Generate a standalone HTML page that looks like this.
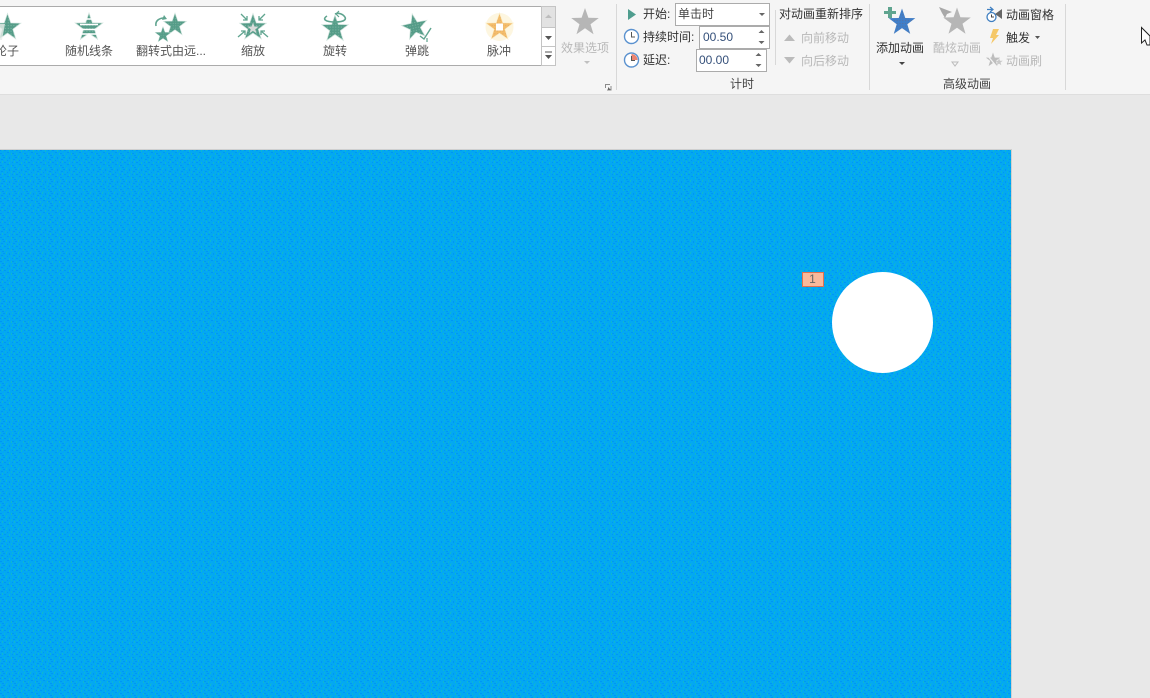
<!DOCTYPE html>
<html lang="zh">
<head>
<meta charset="utf-8">
<style>
html,body{margin:0;padding:0;width:1150px;height:698px;overflow:hidden;background:#e8e8e8}
body{position:relative;font-family:"Liberation Sans","Noto Sans CJK SC",sans-serif;font-size:12px;color:#444}
.a{position:absolute}
.t{position:absolute;white-space:nowrap;line-height:16px;height:16px}
.c{transform:translateX(-50%)}
.g{color:#b8b8b8}
.l{color:#555}
.box{position:absolute;background:#fff;border:1px solid #ababab;box-sizing:border-box}
.sep{position:absolute;width:1px;background:#d8d8d8}
svg{position:absolute;left:0;top:0}
</style>
</head>
<body>
<div class="a" style="left:0;top:0;width:1150px;height:94px;background:#f5f5f5"></div>
<div class="a" style="left:0;top:94px;width:1150px;height:1px;background:#dedede"></div>
<div class="a" style="left:0;top:150px;width:1011px;height:548px;background:#03a8f0;outline:1px solid #cfcfcf"></div>

<div class="box" style="left:-2px;top:6px;width:544px;height:60px"></div>
<div class="a" style="left:541px;top:6px;width:15px;height:60px;background:#fff;border:1px solid #c4c4c4;box-sizing:border-box"></div>
<div class="a" style="left:542px;top:7px;width:13px;height:20px;background:#e2e2e2"></div>
<div class="a" style="left:542px;top:46px;width:13px;height:1px;background:#c4c4c4"></div>
<div class="a" style="left:542px;top:27px;width:13px;height:1px;background:#c4c4c4"></div>

<div class="box" style="left:675px;top:3px;width:95px;height:23px"></div>
<div class="box" style="left:699px;top:26px;width:71px;height:23px"></div>
<div class="box" style="left:696px;top:49px;width:71px;height:23px"></div>

<svg width="1150" height="698" viewBox="0 0 1150 698">
<defs>
<pattern id="d" width="12" height="12" patternUnits="userSpaceOnUse">
<rect width="12" height="12" fill="#03a8f2"/>
<rect x="0" y="0" width="1" height="2" fill="#0bb4d8"/><rect x="3" y="1" width="2" height="1" fill="#0096f5"/>
<rect x="6" y="0" width="1" height="2" fill="#10b8cc"/><rect x="9" y="1" width="1" height="2" fill="#0096f5"/>
<rect x="1" y="3" width="2" height="1" fill="#0096f5"/><rect x="11" y="3" width="1" height="2" fill="#0bb4d8"/>
<rect x="5" y="3" width="1" height="2" fill="#0bb4d8"/><rect x="7" y="4" width="1" height="1" fill="#0096f5"/>
<rect x="2" y="5" width="1" height="2" fill="#10b8cc"/><rect x="9" y="6" width="1" height="2" fill="#10b8cc"/>
<rect x="4" y="6" width="2" height="1" fill="#0096f5"/><rect x="0" y="6" width="1" height="1" fill="#0096f5"/>
<rect x="7" y="8" width="2" height="1" fill="#0096f5"/><rect x="4" y="9" width="1" height="2" fill="#0bb4d8"/>
<rect x="0" y="9" width="2" height="1" fill="#0096f5"/><rect x="11" y="9" width="1" height="2" fill="#10b8cc"/>
<rect x="7" y="11" width="1" height="1" fill="#0bb4d8"/><rect x="2" y="11" width="2" height="1" fill="#0096f5"/>
</pattern>
<pattern id="p" width=".2" height=".2" patternUnits="userSpaceOnUse">
<rect width=".2" height=".2" fill="#559c88"/>
<rect x=".02" y=".03" width=".07" height=".07" fill="#85bba9"/>
</pattern>
<pattern id="b" width=".2" height=".2" patternUnits="userSpaceOnUse">
<rect width=".2" height=".2" fill="#3f7fca"/>
<rect x=".02" y=".03" width=".07" height=".07" fill="#5e6f96"/>
</pattern>
<pattern id="o" width=".2" height=".2" patternUnits="userSpaceOnUse">
<rect width=".2" height=".2" fill="#f4bd6a"/>
<rect x=".02" y=".03" width=".07" height=".07" fill="#dba668"/>
</pattern>
<polygon id="s" points="0,-1 .235,-.324 .951,-.309 .38,.124 .588,.809 0,.4 -.588,.809 -.38,.124 -.951,-.309 -.235,-.324"/>
</defs>
<rect x="0" y="150" width="1011" height="548" fill="url(#d)"/>
<circle cx="882.5" cy="322.5" r="50.5" fill="#fff"/>
<rect x="802.5" y="272.5" width="21" height="14" fill="#f9b99b" stroke="#e0714f"/>

<!-- gallery stars -->
<g fill="url(#p)" stroke="#cfe3dc" stroke-width=".05">
<use href="#s" transform="translate(7.500,27.500) scale(14)"/>
<use href="#s" transform="translate(89,27.500) scale(14.500)"/>
<use href="#s" transform="translate(175,25) scale(12)"/>
<use href="#s" transform="translate(163,35) scale(8.500)"/>
<use href="#s" transform="translate(253,27.500) scale(14)"/>
<use href="#s" transform="translate(335,29) scale(14)"/>
<use href="#s" transform="translate(415,27) rotate(-12) scale(13.500)"/>
</g>
<path d="M0 24H5L2 40H0Z" fill="#e8eeea" opacity=".8"/>
<g stroke="#fff" stroke-width="1.500">
<path d="M85 19H93M80 24.500H98M82 29.500H96M81 34H97"/>
</g>
<use href="#s" transform="translate(253,28.500) scale(6)" fill="#d8dcda"/>
<g fill="none" stroke="#5fa48f" stroke-width="1.600">
<path d="M156 26C155 21 159 18 164 18"/>
<path d="M241 14L247 20M247 16V20H243M265 14L259 20M259 16V20H263M238 37L245 31M241 31H245V35M268 37L261 31M265 31H261V35" stroke-width="1.300"/>
<path d="M327 16C322 19 325 22 335 22C345 22 348 19 343 15C340 13 337 13 335 14"/>
<path d="M339 11L336 14L339 17" stroke-width="1.200"/>
<path d="M420 36L424 39L431 28" stroke-width="1.400"/>
<path d="M427 38V42" stroke-width="1.200"/>
</g>
<path d="M164 15L167 19L162 20Z" fill="#5fa48f"/>
<circle cx="499.500" cy="27" r="14" fill="#fdf4d8" opacity=".8"/>
<use href="#s" transform="translate(499.500,27.500) scale(15.500)" fill="#fbeec8"/>
<use href="#s" transform="translate(499.500,27.500) scale(13.500)" fill="url(#o)"/>
<rect x="496" y="23.500" width="7" height="7" fill="#fff"/>

<!-- scroll arrows -->
<path d="M545 18L548.500 14.500L552 18Z" fill="#bdbdbd"/>
<path d="M545 36H552L548.500 40Z" fill="#555"/>
<path d="M545 55H552L548.500 59ZM545 51.500H552V52.500H545Z" fill="#555"/>

<!-- effect options -->
<use href="#s" transform="translate(585,22.500) scale(14.500)" fill="#b6b6b6"/>
<path d="M584 61H590L587 64Z" fill="#c0c0c0"/>
<path d="M605.500 88V84.500H610M611 86V90H607" fill="none" stroke="#8a8a8a"/><path d="M608 87L611 90H608Z" fill="#666"/>

<!-- timing icons -->
<path d="M628 9L636 14.500L628 20Z" fill="#4f9d8e"/>
<circle cx="631.500" cy="36.500" r="7" fill="#fff" stroke="#5b92cf" stroke-width="1.400"/>
<path d="M631.500 32V37H635" fill="none" stroke="#555"/>
<circle cx="631.500" cy="60" r="7" fill="#fff" stroke="#5b92cf" stroke-width="1.400"/>
<path d="M631.500 54V60H637.500A6 6 0 0 0 631.500 54Z" fill="#ec8370"/>
<path d="M631.500 56V60.500H635" fill="none" stroke="#555"/>

<!-- select and spin arrows -->
<path d="M759 13H765L762 16Z" fill="#666"/>
<path d="M758.500 33L761.500 30L764.500 33ZM758.500 41H764.500L761.500 44Z" fill="#666"/>
<path d="M755.500 56L758.500 53L761.500 56ZM755.500 64H761.500L758.500 67Z" fill="#666"/>
<path d="M784 41L789.500 34.500L795 41Z" fill="#bbb"/>
<path d="M784 57H795L789.500 63.500Z" fill="#bbb"/>

<!-- add animation -->
<use href="#s" transform="translate(902,22.500) scale(14)" fill="url(#b)"/>
<path d="M888 7H892V11H896V14H892V18H888V14H884V11H888Z" fill="#5fa48f"/>
<path d="M899 62H905L902 65Z" fill="#444"/>
<use href="#s" transform="translate(957,22) scale(14.500)" fill="#b6b6b6"/>
<path d="M939 7L952 12L947 14L945 18L942 13Z" fill="#a8a8a8"/>
<path d="M952 62H958L955 66Z" fill="none" stroke="#bbb"/>

<!-- small right icons -->
<circle cx="991.500" cy="17" r="4.500" fill="#fff" stroke="#3f7fc1" stroke-width="1.300"/>
<path d="M991.500 14.500V17H994" fill="none" stroke="#444"/>
<path d="M987 9.500H992M990 7L993 9.500L990 12" fill="none" stroke="#3f7fc1" stroke-width="1.200"/>
<path d="M1002 9V19L995 14Z" fill="#666"/>
<path d="M993 29H999L996 35H999L991 44L993 38H990Z" fill="#f5c869"/>
<path d="M1035 36H1040L1037.500 39Z" fill="#555"/>
<use href="#s" transform="translate(993,60) scale(7.500)" fill="#bdbdbd"/>
<path d="M987 55L997 67" stroke="#f4f4f4" stroke-width="1.300"/>
<use href="#s" transform="translate(999,62) scale(4)" fill="#c8c8c8"/>

<!-- cursor -->
<path d="M1141.500 27.500V43L1145 40L1147 45H1150V36Z" fill="#fff" stroke="#222"/>
</svg>

<div class="sep" style="left:616px;top:4px;height:86px"></div>
<div class="sep" style="left:775px;top:10px;height:55px"></div>
<div class="sep" style="left:869px;top:4px;height:86px"></div>
<div class="sep" style="left:1065px;top:4px;height:86px"></div>

<div class="t c l" style="left:7px;top:43px">轮子</div>
<div class="t c l" style="left:89px;top:43px">随机线条</div>
<div class="t c l" style="left:171px;top:43px">翻转式由远...</div>
<div class="t c l" style="left:253px;top:43px">缩放</div>
<div class="t c l" style="left:335px;top:43px">旋转</div>
<div class="t c l" style="left:417px;top:43px">弹跳</div>
<div class="t c l" style="left:499px;top:43px">脉冲</div>
<div class="t c g" style="left:585px;top:40px">效果选项</div>

<div class="t" style="left:643px;top:6px;color:#333">开始:</div>
<div class="t" style="left:678px;top:6px">单击时</div>
<div class="t" style="left:643px;top:29px;color:#333">持续时间:</div>
<div class="t" style="left:703px;top:29px;color:#35507a">00.50</div>
<div class="t" style="left:643px;top:52px;color:#333">延迟:</div>
<div class="t" style="left:699px;top:52px;color:#35507a">00.00</div>
<div class="t c" style="left:742px;top:76px">计时</div>
<div class="t" style="left:779px;top:6px;color:#333">对动画重新排序</div>
<div class="t g" style="left:801px;top:30px">向前移动</div>
<div class="t g" style="left:801px;top:53px">向后移动</div>
<div class="t c" style="left:900px;top:40px;color:#333">添加动画</div>
<div class="t c g" style="left:957px;top:40px">酷炫动画</div>
<div class="t" style="left:1006px;top:7px;color:#333">动画窗格</div>
<div class="t" style="left:1006px;top:30px;color:#333">触发</div>
<div class="t g" style="left:1006px;top:53px">动画刷</div>
<div class="t c" style="left:967px;top:76px">高级动画</div>
<div class="t c" style="left:812.500px;top:272px;font-size:12px;line-height:15px;height:15px;color:#666">1</div>
</body>
</html>
